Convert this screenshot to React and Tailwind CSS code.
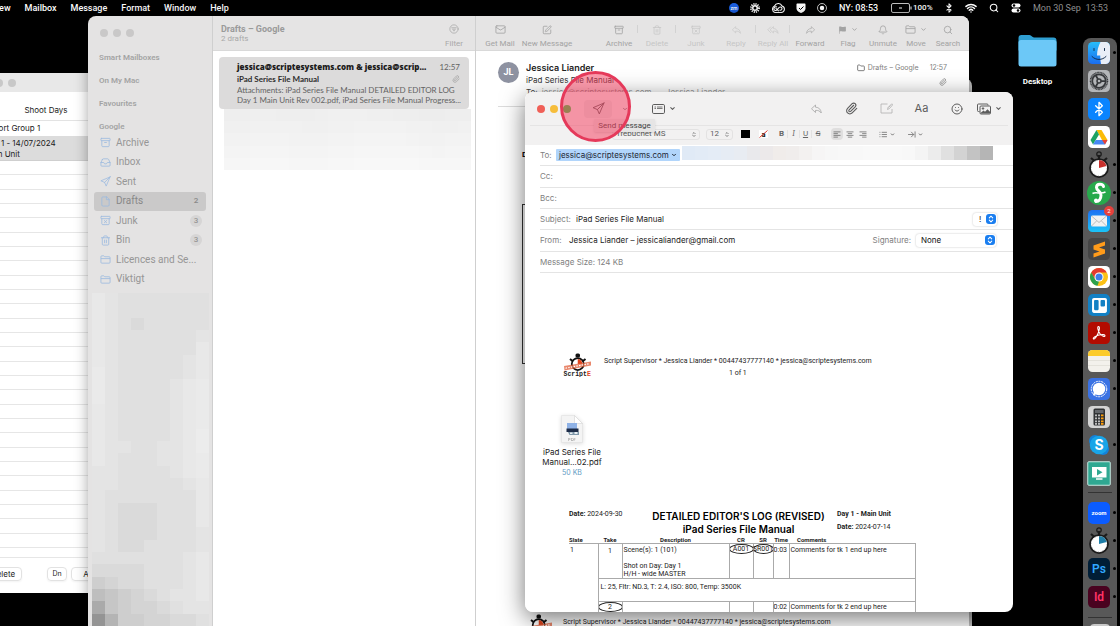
import React, { useState } from 'react';
import {
  Archive,
  ArchiveX,
  Bell,
  Bluetooth,
  ChevronDown,
  File,
  Folder,
  Inbox,
  Mail,
  Paperclip,
  Search,
  Smile,
  SquarePen,
  Trash2,
  Wifi,
} from 'lucide-react';
import { FaTrello } from 'react-icons/fa6';

const SendIcon = ({ size = 12, className }) => (
  <svg viewBox="0 0 24 24" width={size} height={size} className={className} fill="none" stroke="currentColor" strokeWidth="1.700" strokeLinejoin="round" strokeLinecap="round">
    <path d="M22 2 2 10.500l8 3.500L22 2ZM22 2l-8.500 20L10 14" />
  </svg>
);

const ReplyIcon = ({ className }) => (
  <svg viewBox="0 0 24 24" className={className} fill="none" stroke="currentColor" strokeWidth="1.500" strokeLinejoin="round">
    <path d="M10 4 2 11.500 10 19v-4.300c5.500-.3 8.800 1.300 11.500 5.300C21 13 17 8.700 10 8.300Z" />
  </svg>
);

const ReplyAllIcon = ({ className }) => (
  <svg viewBox="0 0 28 24" className={className} fill="none" stroke="currentColor" strokeWidth="1.500" strokeLinejoin="round">
    <path d="M15 4 7 11.500 15 19v-4.300c5-.3 8 1.300 11 5.300-.5-7-4.500-11.300-11-11.700Z" />
    <path d="M9 4 1.500 11.500 9 19" />
  </svg>
);

const ForwardIcon = ({ className }) => (
  <svg viewBox="0 0 24 24" className={className} fill="none" stroke="currentColor" strokeWidth="1.500" strokeLinejoin="round">
    <path d="m14 4 8 7.500L14 19v-4.300c-5.500-.3-8.800 1.300-11.500 5.300C3 13 7 8.700 14 8.300Z" />
  </svg>
);

const FlagIcon = ({ className }) => (
  <svg viewBox="0 0 24 24" className={className} fill="currentColor">
    <path d="M3 3c4-2 7 2 11 1 3-.7 5-1 7-1v12c-3 1-6 1.500-9 .7-3-.7-5-.7-7.500 0V22H3Z" />
  </svg>
);

const FilterIcon = ({ className }) => (
  <svg viewBox="0 0 24 24" className={className} fill="none" stroke="currentColor" strokeWidth="1.800" strokeLinecap="round">
    <circle cx="12" cy="12" r="10" />
    <path d="M6.500 9h11M8.500 12.500h7M10.500 16h3" />
  </svg>
);

const MoveIcon = ({ className }) => (
  <svg viewBox="0 0 24 24" className={className} fill="none" stroke="currentColor" strokeWidth="1.800" strokeLinejoin="round">
    <path d="M2 6c0-1.500.5-2 2-2h4.500l2 2H20c1.500 0 2 .5 2 2v10c0 1.500-.5 2-2 2H4c-1.500 0-2-.5-2-2ZM2 10h20" />
  </svg>
);

const FolderIcon = ({ size = 11, className }) => (
  <span className={className} style={{ width: size }}>
    <MoveIcon className="w-[11px] h-[11px]" />
  </span>
);

const Steppers = ({ className }) => (
  <svg viewBox="0 0 10 14" className={className} fill="none" stroke="currentColor" strokeWidth="1.800" strokeLinecap="round" strokeLinejoin="round">
    <path d="m2 5 3-3 3 3M2 9l3 3 3-3" />
  </svg>
);

const Lines = ({ d, className }) => (
  <svg viewBox="0 0 18 16" className={className} fill="none" stroke="currentColor" strokeWidth="1.600">
    <path d={d} />
  </svg>
);

const HeaderFieldsIcon = () => (
  <svg viewBox="0 0 26 20" className="w-[13px] h-[10px]" fill="none" stroke="currentColor" strokeWidth="2">
    <rect x="1" y="1" width="24" height="18" rx="2.500" />
    <path d="M5 6h3M10 6h11M5 9h3M10 9h11" strokeWidth="1.600" />
  </svg>
);

const MarkupIcon = () => (
  <svg viewBox="0 0 26 22" className="w-[13px] h-[11px]" fill="none" stroke="currentColor" strokeWidth="1.600">
    <path d="M15 2H2v18h22v-8" />
    <path d="m15 13 1-4 7-7c1-1 3 .5 2 2l-6 7ZM17 9l4-4" />
  </svg>
);

const PhotosIcon = () => (
  <svg viewBox="0 0 28 24" className="w-[14px] h-3" fill="none" stroke="currentColor" strokeWidth="2">
    <path d="M5 17H3c-1.500 0-2-.5-2-2V4c0-1.500.5-2 2-2h17c1.500 0 2 .5 2 2v1" />
    <rect x="6" y="6" width="21" height="16" rx="2" />
    <circle cx="12" cy="11" r="1.500" fill="currentColor" />
    <path d="m7 20 6-5 3 2.500 5-5 5 5V21H7Z" fill="currentColor" stroke="none" />
  </svg>
);

const ScriptELogo = () => (
  <svg viewBox="0 0 60 48" className="w-[30px] h-6 shrink-0">
    <rect x="25" y="1" width="9" height="8" rx="3" fill="#111" />
    <path d="m14 12 5 4M45 12l-5 4" stroke="#111" strokeWidth="4" />
    <circle cx="29.500" cy="22" r="12" fill="#fff" stroke="#111" strokeWidth="3.500" />
    <path d="M29.500 22V12a10 10 0 0 1 9 10Z" fill="#e2451d" />
    <path d="m2 26 54-9v8L3 35Z" fill="#e2603c" opacity=".75" />
    <path d="m5 30.500 48-9" stroke="#fff" strokeWidth="2.500" strokeDasharray="3 2.500" />
    <text x="1" y="46" fontFamily="Liberation Mono, monospace" fontWeight="700" fontSize="13" fill="#222">
      Script<tspan fill="#e2451d">E</tspan>
    </text>
  </svg>
);

const PdfIcon = () => (
  <svg viewBox="0 0 44 56" className="w-[22px] h-7 drop-shadow-sm">
    <path d="M1 1h26l16 16v38H1Z" fill="#f4f4f4" stroke="#ddd" />
    <path d="M27 1v16h16Z" fill="#fff" stroke="#ccc" />
    <rect x="12" y="16" width="20" height="13" fill="#8fb2e6" />
    <path d="M11 27h24v7H11Z" fill="#1d2c48" />
    <path d="M14 34h22v6H17Z" fill="#7d96a8" />
    <path d="M18 35h5v3h-5zM27 34h6v4h-6z" fill="#e8eef2" />
    <text x="22" y="51" textAnchor="middle" fontFamily="Inter, sans-serif" fontSize="8" fill="#888">PDF</text>
  </svg>
);

const Stopwatch = ({ color, slice }) => (
  <svg viewBox="0 0 48 56" className="w-6 h-7">
    <circle cx="24" cy="6" r="4.500" fill="none" stroke="#1b1b1b" strokeWidth="2.500" />
    <path d="M24 8v10M8 14l7 6M40 14l-7 6" stroke="#1b1b1b" strokeWidth="4.500" />
    <circle cx="24" cy="34" r="18" fill="#fff" stroke="#1b1b1b" strokeWidth="3.500" />
    <path d={slice} fill={color} />
    <circle cx="24" cy="34" r="15" fill="none" stroke="#777" strokeWidth="1.500" strokeDasharray="1 6.850" />
  </svg>
);

const FinderIcon = () => (
  <svg viewBox="0 0 44 44" className="w-[22px] h-[22px]">
    <defs>
      <linearGradient id="finder" x1="0" y1="0" x2="0" y2="1">
        <stop offset="0" stopColor="#27bdfb" />
        <stop offset="1" stopColor="#1b6df0" />
      </linearGradient>
    </defs>
    <rect width="44" height="44" rx="9" fill="url(#finder)" />
    <path d="M25 0h10a9 9 0 0 1 9 9v26a9 9 0 0 1-9 9h-9c-1-5-1.500-10-1.500-17H18C18 17 21 7 25 0Z" fill="#e9eef7" />
    <path d="M12 13v4M33 13v4M8 29c8 8 20 8 28 0" stroke="#16304f" strokeWidth="2" fill="none" strokeLinecap="round" />
  </svg>
);

const SettingsIcon = () => (
  <svg viewBox="0 0 44 44" className="w-[22px] h-[22px]">
    <rect width="44" height="44" rx="9" fill="#b3b5b8" />
    <g fill="none" stroke="#36383b">
      <circle cx="22" cy="22" r="17" strokeWidth="3" strokeDasharray="2 1" />
      <circle cx="22" cy="22" r="13.500" strokeWidth="3.500" />
      <circle cx="22" cy="22" r="4" strokeWidth="3" />
      <path d="M26 22h10M20 18.500 15 10M20 25.500 15 34" strokeWidth="3.500" />
    </g>
  </svg>
);

const BluetoothTile = () => (
  <span className="flex w-[22px] h-[22px] items-center justify-center rounded-[5px] bg-[#0a84ff] text-white">
    <Bluetooth size={16} strokeWidth={2} />
  </span>
);

const DriveIcon = () => (
  <svg viewBox="0 0 44 44" className="w-[22px] h-[22px]">
    <rect width="44" height="44" rx="9" fill="#fff" />
    <path d="M17 8h10l12 20H28Z" fill="#fbbc05" />
    <path d="M17 8 5 28l5 9 12-20Z" fill="#1da362" />
    <path d="M15.500 28H39l-5 9H10Z" fill="#4688f4" />
    <path d="M39 28H28l6 9Z" fill="#ea4335" />
  </svg>
);

const FinalDraftIcon = () => (
  <svg viewBox="0 0 48 48" className="w-6 h-6">
    <circle cx="24" cy="24" r="24" fill="#27a94c" />
    <path d="M33 11c-1-6-14-7-14 2 0 6 9 8 9 15 0 8-4 13-10 13" fill="none" stroke="#fff" strokeWidth="6" strokeLinecap="round" />
    <path d="M11 25c7-4 16 2 26-3" fill="none" stroke="#fff" strokeWidth="3" />
    <circle cx="18" cy="39" r="4" fill="#fff" />
  </svg>
);

const MailAppIcon = () => (
  <span className="relative">
    <svg viewBox="0 0 44 44" className="w-[22px] h-[22px]">
      <defs>
        <linearGradient id="mailapp" x1="0" y1="0" x2="0" y2="1">
          <stop offset="0" stopColor="#1d6ff2" />
          <stop offset="1" stopColor="#1bc4f8" />
        </linearGradient>
      </defs>
      <rect width="44" height="44" rx="9" fill="url(#mailapp)" />
      <rect x="6" y="11" width="32" height="22" rx="3" fill="#f1f1f1" />
      <path d="m7 12 15 13 15-13M7 32l10-10M37 32 27 22" fill="none" stroke="#aaa" strokeWidth="1.500" />
    </svg>
    <span className="absolute -top-1 -right-1 flex w-[10px] h-[10px] items-center justify-center rounded-full bg-[#e8403c] text-[6px] leading-none text-white">
      2
    </span>
  </span>
);

const SublimeIcon = () => (
  <svg viewBox="0 0 44 44" className="w-[22px] h-[22px]">
    <rect width="44" height="44" rx="9" fill="#454545" />
    <path d="m11 15 23-8v8l-12 4 12 4v8l-23 8v-8l12-4-12-4Z" fill="#ff9b1a" />
  </svg>
);

const ChromeIcon = () => (
  <svg viewBox="0 0 44 44" className="w-[22px] h-[22px]">
    <rect width="44" height="44" rx="9" fill="#fff" />
    <circle cx="22" cy="22" r="18" fill="#fbc116" />
    <path d="M6.400 13A18 18 0 0 1 37.600 13H22l-7.800 13.500Z" fill="#e33b2e" />
    <path d="M6.400 13 14.200 26.500 22 31l-3 8.700A18 18 0 0 1 6.400 13Z" fill="#2da14d" />
    <circle cx="22" cy="22" r="9" fill="#fff" />
    <circle cx="22" cy="22" r="7" fill="#3f7fe8" />
  </svg>
);

const TrelloTile = () => (
  <span className="flex w-[22px] h-[22px] items-center justify-center rounded-[5px] bg-[#1280c4] text-white">
    <FaTrello size={17} />
  </span>
);

const AcrobatIcon = () => (
  <svg viewBox="0 0 44 44" className="w-[22px] h-[22px]">
    <rect width="44" height="44" rx="9" fill="#b30b00" />
    <path
      d="M21 9c3 0 2 7-1 14-3 7-7 12-9 11-2-2 4-6 11-8 7-1.500 12-1 12 1.500 0 3-6 1-10-4-4-5-6-14.500-3-14.500Z"
      fill="none"
      stroke="#fff"
      strokeWidth="2.200"
    />
  </svg>
);

const NotesIcon = () => (
  <svg viewBox="0 0 44 44" className="w-[22px] h-[22px]">
    <rect width="44" height="44" rx="9" fill="#f3f1ec" />
    <path d="M0 12V9a9 9 0 0 1 9-9h26a9 9 0 0 1 9 9v3Z" fill="#fccb2a" />
    <path d="M0 21h44M0 31h44" stroke="#dfdcd5" strokeWidth="1.500" />
  </svg>
);

const SignalIcon = () => (
  <svg viewBox="0 0 44 44" className="w-[22px] h-[22px]">
    <rect width="44" height="44" rx="9" fill="#3a72e4" />
    <circle cx="22" cy="22" r="12.500" fill="#fff" />
    <path d="m10 35 2-8 6 5Z" fill="#fff" />
    <circle cx="22" cy="22" r="15.500" fill="none" stroke="#fff" strokeWidth="2" strokeDasharray="4 1.500" />
  </svg>
);

const CalculatorIcon = () => (
  <svg viewBox="0 0 44 44" className="w-[22px] h-[22px]">
    <rect width="44" height="44" rx="9" fill="#d4d4d4" />
    <rect x="11" y="5" width="23" height="34" rx="3" fill="#303234" />
    <rect x="14" y="8" width="17" height="6" fill="#63666a" />
    <path d="M14 18.500h10M14 24.500h10M14 30.500h10M14 35.500h10" stroke="#bbb" strokeWidth="3.500" strokeDasharray="4 2" />
    <path d="M26 18.500h5M26 24.500h5M26 30.500h5M26 35.500h5" stroke="#ff9f0a" strokeWidth="3.500" />
  </svg>
);

const SkypeIcon = () => (
  <svg viewBox="0 0 44 44" className="w-[22px] h-[22px]">
    <circle cx="14" cy="14" r="12" fill="#1382d8" />
    <circle cx="30" cy="30" r="12" fill="#1382d8" />
    <circle cx="22" cy="22" r="18.500" fill="#18a5e8" />
    <text x="22" y="32" textAnchor="middle" fontFamily="Inter, sans-serif" fontWeight="700" fontSize="28" fill="#fff">S</text>
  </svg>
);

const PlayerIcon = () => (
  <svg viewBox="0 0 48 50" className="w-6 h-[25px]">
    <rect x="1.500" y="1.500" width="45" height="47" rx="2" fill="#2fa892" stroke="#c9e9e2" strokeWidth="2" />
    <path d="M10 12h29v21H10Z" fill="#fff" />
    <path d="M18 36h13" stroke="#fff" strokeWidth="3" />
    <path d="m20 16 11 6.500L20 29Z" fill="#2fa892" />
  </svg>
);

const ZoomTile = () => (
  <span className="flex w-[22px] h-[22px] items-center justify-center rounded-[5px] bg-[#0b5cff] text-[6px] font-bold leading-none text-white">
    zoom
  </span>
);

const PsTile = () => (
  <span className="flex w-[22px] h-[22px] items-center justify-center rounded-[5px] bg-[#001e36] text-[12px] font-semibold leading-none text-[#31a8ff]">
    Ps
  </span>
);

const IdTile = () => (
  <span className="flex w-[22px] h-[22px] items-center justify-center rounded-[5px] bg-[#49021f] text-[12px] font-semibold leading-none text-[#ff3366]">
    Id
  </span>
);

const dockApps = [
  { name: 'Finder', icon: <FinderIcon />, running: true },
  { name: 'System Settings', icon: <SettingsIcon /> },
  { name: 'Bluetooth File Exchange', icon: <BluetoothTile /> },
  { name: 'Google Drive', icon: <DriveIcon /> },
  { name: 'ScriptE', icon: <Stopwatch color="#c9302c" slice="M24 34V18a16 16 0 0 1 15 12Z" />, running: true },
  { name: 'Final Draft', icon: <FinalDraftIcon />, running: true },
  { name: 'Mail', icon: <MailAppIcon />, running: true },
  { name: 'Sublime Text', icon: <SublimeIcon />, running: true },
  { name: 'Chrome', icon: <ChromeIcon />, running: true },
  { name: 'Trello', icon: <TrelloTile />, running: true },
  { name: 'Acrobat', icon: <AcrobatIcon />, running: true },
  { name: 'Notes', icon: <NotesIcon />, running: true },
  { name: 'Signal', icon: <SignalIcon />, running: true },
  { name: 'Calculator', icon: <CalculatorIcon /> },
  { name: 'Skype', icon: <SkypeIcon />, running: true },
  { name: 'Player', icon: <PlayerIcon /> },
];

const dockRecent = [
  { name: 'Zoom', icon: <ZoomTile />, running: true },
  { name: 'Timer', icon: <Stopwatch color="#1f7ea8" slice="M24 34V18a16 16 0 0 1 15.500 12Z" />, running: true },
  { name: 'Photoshop', icon: <PsTile />, running: true },
  { name: 'InDesign', icon: <IdTile />, running: true },
];

const DockItem = ({ app }) => (
  <button aria-label={app.name} className="relative flex h-7 w-full shrink-0 items-center justify-center pr-[2px]">
    {app.icon}
    {app.running && <span className="absolute right-[1px] top-3 w-[3px] h-[3px] rounded-full bg-black" />}
  </button>
);

const Dock = () => (
  <nav aria-label="Dock" className="absolute right-[3px] top-[38px] bottom-0 flex w-[34px] flex-col overflow-hidden rounded-t-lg bg-[#585858] pt-[1px]">
    {dockApps.map((app) => (
      <DockItem key={app.name} app={app} />
    ))}
    <hr className="mx-[5px] mb-[6px] mt-[5px] shrink-0 border-[#333]" />
    {dockRecent.map((app) => (
      <DockItem key={app.name} app={app} />
    ))}
    <hr className="mx-[5px] my-[6px] shrink-0 border-[#333]" />
    <span className="mx-[7px] h-5 shrink-0 rounded-t-sm bg-[#c9c9c9]" />
  </nav>
);

const MenuBar = () => (
  <header className="flex h-4 items-center justify-between bg-black pr-3 text-[9px] font-medium leading-none text-white">
    <nav className="-ml-[9px] flex gap-[14px]">
      {['View', 'Mailbox', 'Message', 'Format', 'Window', 'Help'].map((item) => (
        <button key={item}>{item}</button>
      ))}
    </nav>
    <div className="flex items-center gap-3">
      <div className="flex items-center gap-[11px]">
        <span className="flex w-[10px] h-[10px] items-center justify-center rounded-full bg-[#1b5fe0] text-[5px]">zm</span>
        <svg viewBox="0 0 20 20" className="w-[10px] h-[10px]" fill="none" stroke="#fff">
          <circle cx="10" cy="10" r="4.500" strokeWidth="3" />
          <circle cx="10" cy="10" r="8" strokeWidth="4" strokeDasharray="2.200 1.990" />
        </svg>
        <svg viewBox="0 0 28 20" className="w-[14px] h-[10px]" fill="none" stroke="#fff" strokeWidth="2.200">
          <path d="M8 19a7 7 0 0 1-1-13C10 0 19-1 22 6c7 2 6 12-1 13Z" />
          <path d="M12 8c-7-3-9 8-2 7 4-1 5-8 9-7 5 1 3 8-2 6M9 11c2-1 4 4 7 5" />
        </svg>
        <svg viewBox="0 0 20 20" className="w-[10px] h-[10px]">
          <path d="M3 1h14c1.500 0 2 1 2 2v8c0 4-5 8-9 9-4-1-9-5-9-9V3c0-1 .5-2 2-2Z" fill="#fff" />
          <path d="m6 10 3 3 6-6" fill="none" stroke="#000" strokeWidth="2" />
        </svg>
        <svg viewBox="0 0 20 20" className="w-[10px] h-[10px]">
          <circle cx="10" cy="10" r="9" fill="none" stroke="#fff" strokeWidth="1.500" />
          <circle cx="10" cy="10" r="4.500" fill="#fff" />
        </svg>
      </div>
      <span className="w-10 whitespace-nowrap">NY: 08:53</span>
      <span className="flex w-[42px] items-center gap-[1px] text-[8px]">
        <svg viewBox="0 0 42 20" className="w-[21px] h-[10px] shrink-0" fill="none" stroke="#fff" strokeWidth="1.500">
          <rect x="1" y="1" width="36" height="18" rx="3" />
          <path d="M40 7v6M16 10h6" strokeWidth="2" />
        </svg>
        100%
      </span>
      <Bluetooth size={10} strokeWidth={2.5} className="-mx-px" />
      <Wifi size={12} strokeWidth={3} />
      <Search size={10} strokeWidth={2.5} />
      <svg viewBox="0 0 20 20" className="w-[10px] h-[10px]">
        <rect x="1" y="1" width="18" height="8" rx="4" fill="#fff" />
        <circle cx="6" cy="5" r="2.500" fill="#000" />
        <rect x="1" y="11" width="18" height="8" rx="4" fill="#fff" />
        <circle cx="14" cy="15" r="2.500" fill="#000" />
      </svg>
      <time className="flex w-[75px] justify-between whitespace-nowrap font-normal text-[#8f8f8f]">
        <span>Mon 30 Sep</span>
        <span>13:53</span>
      </time>
    </div>
  </header>
);

const ShootDaysWindow = () => (
  <section className="absolute -left-6 top-[73px] flex h-[520px] w-[140px] flex-col bg-white font-['Inter',sans-serif] text-[8px] leading-[11px] text-[#222]">
    <div className="flex h-[19px] items-center gap-[5px] bg-[#e8e8e8] pl-[19px]">
      <span className="w-2 h-2 rounded-full bg-[#c8c8c8]" />
      <span className="w-2 h-2 rounded-full bg-[#c8c8c8]" />
    </div>
    <h2 className="flex h-[29px] items-end justify-center border-b border-[#e3e3e3] pb-1">Shoot Days</h2>
    <p className="h-[15px] pl-2 pt-[2px]">Report Group 1</p>
    <p className="h-[25px] border-b border-[#cfcfcf] bg-[#dcdcdc] pl-2 pt-[2px]">
      Day 1 - 14/07/2024
      <br />
      Main Unit
    </p>
    <div className="flex flex-1 flex-col">
      {Array.from({ length: 27 }, (_, i) => (
        <div key={i} className="flex-1 border-b border-[#e6e6e6]" />
      ))}
    </div>
    <div className="h-[10px] border-b border-[#e6e6e6]" />
    <div className="flex h-[35px] items-center gap-1 pb-1 pl-2">
      <button className="h-[14px] w-[38px] rounded border border-[#e2e2e2] leading-none shadow-xs">Delete</button>
      <button className="ml-[21px] h-[14px] w-5 shrink-0 rounded border border-[#e2e2e2] text-[7px] leading-none shadow-xs">Dn</button>
      <button className="h-[14px] w-10 shrink-0 rounded border border-[#e2e2e2] leading-none shadow-xs">Add</button>
    </div>
  </section>
);

// redacted blocks, one hex digit per cell, f is the lightest
const sidebarMosaic = [
  'ba9999999',
  'ba9999999',
  'ba9899999',
  'ba999999a',
  'ba999999b',
  'ba99999ab',
  'ca99999ab',
  'ca9999abc',
  'ca9999abc',
  'ba9999abc',
  'ba9999abc',
  'ba9999abd',
  'baa99aabd',
  'ba999aabc',
  'aa9999abc',
  'aa99999ab',
  'a9999999b',
  'a9888999b',
  'a9888999b',
  'a9888999a',
  'a9889999a',
  '9999999ab',
  '8888999ab',
  '6788999ab',
  '456789aab',
  '2567789aa',
  '036677889',
];

const listMosaic = ['3344333455544332233', '5566665566777766556', '7788877788999987788', '99aaa999aabbbbba9aa', 'bbcccbbbccdddddcccc'];

const sidebarLevel = (digit) => 238 - Math.round(0.4 * (15 - digit) ** 2);
const listLevel = (digit) => 235 + digit;

const Mosaic = ({ rows, level, className }) => (
  <div aria-hidden="true" className={className}>
    {rows.map((row, i) => (
      <div key={i} className="flex flex-1">
        {row.split('').map((digit, j) => {
          const grey = level(parseInt(digit, 16));
          return <span key={j} className="flex-1" style={{ backgroundColor: `rgb(${grey}, ${grey}, ${grey})` }} />;
        })}
      </div>
    ))}
  </div>
);

const mailboxes = [
  { name: 'Archive', Icon: Archive },
  { name: 'Inbox', Icon: Inbox },
  { name: 'Sent', Icon: SendIcon },
  { name: 'Drafts', Icon: File, count: 2 },
  { name: 'Junk', Icon: ArchiveX, count: 3 },
  { name: 'Bin', Icon: Trash2, count: 3 },
  { name: 'Licences and Se...', Icon: FolderIcon },
  { name: 'Viktigt', Icon: FolderIcon },
];

const Sidebar = ({ active, onSelect }) => (
  <aside className="flex w-[125px] shrink-0 flex-col border-r border-[#cfcfcf] bg-[#e4e3e3] text-[#969696]">
    <div className="flex h-[30px] shrink-0 items-end gap-[5px] pb-[9px] pl-3">
      <span className="w-2 h-2 rounded-full bg-[#c9c8c8]" />
      <span className="w-2 h-2 rounded-full bg-[#c9c8c8]" />
      <span className="w-2 h-2 rounded-full bg-[#c9c8c8]" />
    </div>
    {['Smart Mailboxes', 'On My Mac', 'Favourites', 'Google'].map((label) => (
      <h3 key={label} className="flex h-[23px] shrink-0 items-center pl-[11px] text-[8px] font-semibold leading-none text-[#a3a3a3]">
        {label}
      </h3>
    ))}
    <div className="mx-[6px] mt-[-5px] flex h-[156px] shrink-0 flex-col">
      {mailboxes.map(({ name, Icon, count }) => (
        <a
          key={name}
          href="#mailbox"
          onClick={() => onSelect(name)}
          className={`flex flex-1 items-center rounded-[3px] pl-[6px] pr-1 text-[10px] leading-none ${
            active === name ? 'bg-[#cac9c9] text-[#888]' : ''
          }`}
        >
          <Icon size={11} strokeWidth={1.8} className="mr-[5px] shrink-0 text-[#9dbbe0]" />
          <span className="flex-1 whitespace-nowrap">{name}</span>
          {count && (
            <span
              className={`flex w-3 h-3 items-center justify-center rounded-full text-[8px] font-medium ${
                active === name ? '' : 'bg-[#d6d5d5]'
              }`}
            >
              {count}
            </span>
          )}
        </a>
      ))}
    </div>
    <Mosaic rows={sidebarMosaic} level={sidebarLevel} className="ml-1 mr-[3px] mt-1 flex flex-1 flex-col" />
  </aside>
);

const MessageList = () => (
  <section className="flex w-[263px] shrink-0 flex-col border-r border-[#cfcfcf] bg-white">
    <div className="flex h-[35px] shrink-0 justify-between border-b border-[#d9d9d9] bg-[#e5e4e4] pl-2 pr-3 text-[#a8a8a8]">
      <div>
        <h2 className="pt-[7px] text-[9px] font-bold leading-3 text-[#9a9a9a]">Drafts – Google</h2>
        <p className="text-[8px] leading-[8px]">2 drafts</p>
      </div>
      <button className="flex flex-col items-center gap-[6px] pt-2 text-[8px] leading-[8px]">
        <FilterIcon className="w-[10px] h-[10px]" />
        Filter
      </button>
    </div>
    <article className="mx-[6px] mt-[6px] flex h-[52px] flex-col justify-center rounded bg-[#dcdbdb] pl-[18px] pr-[9px] font-['Lato','Open_Sans',sans-serif] text-[8px] leading-[10px] text-[#636363]">
      <div className="flex items-center justify-between whitespace-nowrap">
        <h3 className="font-['Open_Sans',sans-serif] text-[8px] font-extrabold leading-3 text-[#1c1c1c]">
          jessica@scriptesystems.com &amp; jessica@scrip...
        </h3>
        <time>12:57</time>
      </div>
      <div className="flex items-center justify-between">
        <h4 className="text-[8px] font-bold leading-3 text-[#2c2c2c]">iPad Series File Manual</h4>
        <Paperclip size={8} className="text-[#a0a0a0]" />
      </div>
      <p className="whitespace-nowrap">
        Attachments: iPad Series File Manual DETAILED EDITOR LOG
        <br />
        Day 1 Main Unit Rev 002.pdf, iPad Series File Manual Progress...
      </p>
    </article>
    <Mosaic rows={listMosaic} level={listLevel} className="ml-[11px] mr-1 flex h-[61px] flex-col" />
  </section>
);

const leftTools = [
  { label: 'Get Mail', icon: <Mail size={11} strokeWidth={1.8} />, width: 'w-10' },
  { label: 'New Message', icon: <SquarePen size={10} strokeWidth={2} />, width: 'w-[54px]' },
];

const rightTools = [
  { label: 'Archive', icon: <Archive size={10} strokeWidth={2} />, width: 'w-[38px]', divider: true },
  { label: 'Delete', icon: <Trash2 size={10} strokeWidth={1.8} />, width: 'w-[38px]', off: true, divider: true },
  { label: 'Junk', icon: <ArchiveX size={10} strokeWidth={1.8} />, width: 'w-10', off: true },
  { label: 'Reply', icon: <ReplyIcon className="w-[11px] h-[10px]" />, width: 'w-10', off: true, divider: true },
  { label: 'Reply All', icon: <ReplyAllIcon className="w-3 h-[10px]" />, width: 'w-[34px]', off: true, divider: true },
  { label: 'Forward', icon: <ForwardIcon className="w-[11px] h-[10px]" />, width: 'w-10' },
  { label: 'Flag', icon: <FlagIcon className="w-[9px] h-[10px]" />, width: 'w-9', menu: true },
  { label: 'Unmute', icon: <Bell size={10} strokeWidth={2} />, width: 'w-[34px]' },
  { label: 'Move', icon: <MoveIcon className="w-[11px] h-[11px]" />, width: 'w-8', menu: true },
  { label: 'Search', icon: <Search size={10} strokeWidth={2} />, width: 'w-8' },
];

const ToolButton = ({ tool }) => (
  <>
    <button
      className={`flex shrink-0 flex-col items-center gap-[5px] whitespace-nowrap pt-2 text-[8px] leading-[8px] ${tool.width} ${
        tool.off ? 'text-[#c6c6c6]' : 'text-[#a3a3a3]'
      }`}
    >
      <span className="flex h-[11px] items-center gap-1">
        {tool.icon}
        {tool.menu && <ChevronDown size={7} strokeWidth={3} />}
      </span>
      {tool.label}
    </button>
    {tool.divider && <span className="-ml-px mt-[9px] h-2 w-px shrink-0 bg-[#d2d2d2]" />}
  </>
);

const MessagePane = () => (
  <section className="flex min-w-0 flex-1 flex-col bg-white text-[#333]">
    <div className="flex h-[35px] shrink-0 justify-between border-b border-[#d9d9d9] bg-[#e5e4e4] pl-1 pr-[5px]">
      <div className="flex">
        {leftTools.map((tool) => (
          <ToolButton key={tool.label} tool={tool} />
        ))}
      </div>
      <div className="flex">
        {rightTools.map((tool) => (
          <ToolButton key={tool.label} tool={tool} />
        ))}
      </div>
    </div>
    <div className="mx-[22px] flex h-14 shrink-0 gap-[7px] border-b border-[#dcdcdc] pt-[11px]">
      <span className="flex w-[21px] h-[21px] shrink-0 items-center justify-center rounded-full bg-[#8e92a1] text-[9px] font-bold text-white">
        JL
      </span>
      <div className="flex-1 font-['Inter',sans-serif] text-[8px] leading-[12px]">
        <h3 className="-mt-[1px] text-[9px] font-semibold leading-[13px] text-[#222]">Jessica Liander</h3>
        <p>iPad Series File Manual</p>
        <p className="flex gap-1 text-[#999]">
          <span className="text-[#444]">To:</span>
          <span>jessica@scriptesystems.com,</span>
          <span className="ml-2">Jessica Liander</span>
        </p>
      </div>
      <div className="flex flex-col items-end gap-1 font-['Inter',sans-serif] text-[7px] leading-3 text-[#808080]">
        <p className="flex items-center gap-[3px]">
          <Folder size={8} strokeWidth={2.5} className="text-[#666]" />
          Drafts – Google
          <time className="ml-2">12:57</time>
        </p>
        <Paperclip size={8} />
      </div>
    </div>
    <div className="flex flex-1 flex-col pl-[46px] pt-[43px]">
      <p className="text-[8px] font-bold leading-[10px] text-black">D</p>
      <div className="mt-11 h-[160px] border border-[#333]" />
      <div className="mt-[250px] flex gap-[9px] pl-[2px]">
        <ScriptELogo />
        <p className="pt-[3px] text-[7px] leading-[10px] text-[#222]">
          Script Supervisor * Jessica Liander * 00447437777140 * jessica@scriptesystems.com
        </p>
      </div>
    </div>
  </section>
);

const MailWindow = () => {
  const [mailbox, setMailbox] = useState('Drafts');

  return (
    <main className="absolute bottom-0 left-[88px] right-[151px] top-4 flex overflow-hidden rounded-t-lg shadow-[0_0_14px_rgba(0,0,0,0.35)]">
      <Sidebar active={mailbox} onSelect={setMailbox} />
      <MessageList />
      <MessagePane />
    </main>
  );
};

// recipients hidden behind coarse pixels
const recipientCells = [
  '#e0eaf6', '#e2ebf6', '#e4ecf6', '#e6ecf4', '#e8ecf2', '#e9e9ec', '#ece9ea', '#f0ecea',
  '#f0edec', '#f3f1f0', '#f6f5f5', '#f7f7f7', '#f8f8f8', '#f8f8f8', '#f9f9f9', '#f9f9f9',
  '#f9f9f9', '#f8f8f8', '#f4f4f4', '#ececec', '#e0e0e0', '#d3d3d3', '#c3c3c3', '#b5b5b5',
];

const ComposeToolbar = () => (
  <div className="flex h-[33px] shrink-0 items-center justify-between pl-3 pr-[9px] text-[#5c5c5c]">
    <div className="flex items-center">
      <div className="flex gap-[5px]">
        <span className="w-2 h-2 rounded-full bg-[#f05f57]" />
        <span className="w-2 h-2 rounded-full bg-[#f6bd3b]" />
        <span className="w-2 h-2 rounded-full bg-[#3cc84a]" />
      </div>
      <button aria-label="Send message" className="ml-[13px] flex w-7 h-[18px] items-center justify-center rounded bg-[#e4e4e4]">
        <SendIcon size={13} />
      </button>
      <button aria-label="Send options" className="ml-[10px]">
        <ChevronDown size={6} strokeWidth={3} />
      </button>
      <button aria-label="Header fields" className="ml-6 flex items-center gap-1">
        <HeaderFieldsIcon />
        <ChevronDown size={7} strokeWidth={3.5} />
      </button>
    </div>
    <div className="flex items-center">
      <button aria-label="Reply" className="flex w-[35px] justify-center text-[#a0a0a0]">
        <ReplyIcon className="w-[13px] h-3" />
      </button>
      <button aria-label="Attach" className="flex w-[35px] justify-center">
        <Paperclip size={13} strokeWidth={2} />
      </button>
      <button aria-label="Markup" className="flex w-[35px] justify-center text-[#b0b0b0]">
        <MarkupIcon />
      </button>
      <button className="flex w-[35px] justify-center font-['Inter',sans-serif] text-[11px] leading-none">Aa</button>
      <button aria-label="Emoji" className="flex w-[35px] justify-center">
        <Smile size={12} strokeWidth={2} />
      </button>
      <button aria-label="Photos" className="flex w-[30px] items-center justify-center gap-1">
        <PhotosIcon />
        <ChevronDown size={7} strokeWidth={3.5} />
      </button>
    </div>
  </div>
);

const FormatBar = () => (
  <div className="mx-[5px] flex h-5 shrink-0 items-center border-t border-[#e5e4e4] pb-[3px] pl-[82px] text-[8px] leading-none text-[#5c5c5c]">
    <label className="flex h-[11px] w-[88px] items-center rounded-[3px] border border-[#e3e2e2] pr-[3px]">
      <select aria-label="Font" className="w-0 flex-1 appearance-none pl-[3px]">
        <option>Trebuchet MS</option>
      </select>
      <Steppers className="w-1 h-[7px]" />
    </label>
    <label className="ml-[6px] flex h-[11px] w-[27px] items-center rounded-[3px] border border-[#e3e2e2] pr-[3px]">
      <select aria-label="Font size" className="w-0 flex-1 appearance-none pl-[3px]">
        <option>12</option>
      </select>
      <Steppers className="w-1 h-[7px]" />
    </label>
    <button aria-label="Text colour" className="ml-2 w-[9px] h-2 bg-black" />
    <button aria-label="Highlight colour" className="ml-[9px] w-[9px] h-2">
      <svg viewBox="0 0 18 16" className="w-[9px] h-2">
        <rect width="18" height="16" fill="#fff" />
        <text x="5" y="13" fontFamily="Inter, sans-serif" fontWeight="700" fontSize="14" fill="#111">a</text>
        <path d="M1 15 17 1" stroke="#d8382f" strokeWidth="2" />
      </svg>
    </button>
    <div className="ml-2 flex text-[#666]">
      <button className="w-3 border-r border-[#e3e2e2] font-bold">B</button>
      <button className="w-3 border-r border-[#e3e2e2] font-serif italic">I</button>
      <button className="w-3 border-r border-[#e3e2e2] underline">U</button>
      <button className="w-3 line-through">S</button>
    </div>
    <div className="ml-[7px] flex gap-[1px]">
      <button aria-label="Align left" className="flex w-3 h-3 items-center justify-center rounded-sm bg-[#dfdede]">
        <Lines className="w-2 h-[7px]" d="M1 2h16M1 6h10M1 10h16M1 14h10" />
      </button>
      <button aria-label="Align centre" className="flex w-3 h-3 items-center justify-center">
        <Lines className="w-2 h-[7px]" d="M1 2h16M4 6h10M1 10h16M4 14h10" />
      </button>
      <button aria-label="Align right" className="flex w-3 h-3 items-center justify-center">
        <Lines className="w-2 h-[7px]" d="M1 2h16M7 6h10M1 10h16M7 14h10" />
      </button>
    </div>
    <button aria-label="Lists" className="ml-[10px] flex items-center gap-[3px]">
      <Lines className="w-2 h-[7px]" d="M1 3h2M1 8h2M1 13h2M6 3h12M6 8h12M6 13h12" />
      <ChevronDown size={5} strokeWidth={4} />
    </button>
    <button aria-label="Indent" className="ml-[13px] flex items-center gap-[2px]">
      <Lines className="w-2 h-[7px]" d="M0 8h13M7 2l6 6-6 6M16 1v14" />
      <ChevronDown size={5} strokeWidth={4} />
    </button>
  </div>
);

const BlueSteppers = () => (
  <span className="flex w-[10px] h-[10px] items-center justify-center rounded-[3px] bg-[#1a7ef0] text-white">
    <Steppers className="w-[6px] h-2" />
  </span>
);

const Field = ({ children }) => (
  <div className="flex flex-1 items-center border-b border-[#e4e4e4]">{children}</div>
);

const ComposeFields = () => (
  <div className="ml-[15px] flex h-32 shrink-0 flex-col font-['Inter',sans-serif] text-[8px] leading-3 text-[#808080]">
    <Field>
      <span className="w-4">To:</span>
      <button className="flex h-3 items-center gap-[2px] whitespace-nowrap rounded-[1px] bg-[#b1d5fb] px-[3px] text-[#1d2733]">
        jessica@scriptesystems.com
        <ChevronDown size={6} strokeWidth={4} />
      </button>
      <div aria-hidden="true" className="mb-1 ml-[2px] mr-5 flex h-[14px] flex-1">
        {recipientCells.map((cell, i) => (
          <span key={i} className="flex-1" style={{ backgroundColor: cell }} />
        ))}
      </div>
    </Field>
    <Field>
      <label htmlFor="cc">Cc:</label>
      <input id="cc" className="ml-1 flex-1 text-[#222] outline-none" />
    </Field>
    <Field>
      <label htmlFor="bcc">Bcc:</label>
      <input id="bcc" className="ml-1 flex-1 text-[#222] outline-none" />
    </Field>
    <Field>
      <label htmlFor="subject" className="w-9">Subject:</label>
      <input id="subject" defaultValue="iPad Series File Manual" className="flex-1 text-[#222] outline-none" />
      <label className="mr-4 flex h-[13px] w-6 items-center rounded-[3px] pr-[1px] shadow-[0_0_2px_rgba(0,0,0,0.25)]">
        <select aria-label="Priority" className="w-0 flex-1 appearance-none pl-[6px] text-[#222]">
          <option>!</option>
        </select>
        <BlueSteppers />
      </label>
    </Field>
    <Field>
      <span className="w-[29px]">From:</span>
      <span className="flex-1 text-[#222]">Jessica Liander – jessicaliander@gmail.com</span>
      <label htmlFor="signature">Signature:</label>
      <span className="ml-[5px] mr-[17px] flex h-[13px] w-20 items-center rounded-[3px] pr-[1px] shadow-[0_0_2px_rgba(0,0,0,0.25)]">
        <select id="signature" className="flex-1 appearance-none pl-[5px] text-[#111]">
          <option>None</option>
        </select>
        <BlueSteppers />
      </span>
    </Field>
    <Field>Message Size: 124 KB</Field>
  </div>
);

const Circled = ({ children }) => (
  <span className="-mx-px flex h-[10px] items-center justify-center rounded-[50%] border border-[#222]">{children}</span>
);

const EditorLog = () => (
  <section className="mt-8 ml-11 w-[346px] text-[7px] leading-[8px] text-[#222]">
    <div className="flex">
      <p className="w-[71px]">
        <b>Date:</b> 2024-09-30
      </p>
      <h2 className="flex-1 whitespace-nowrap text-center font-['Inter',sans-serif] text-[10px] font-semibold leading-[13px] text-black">
        DETAILED EDITOR'S LOG (REVISED)
        <br />
        iPad Series File Manual
      </h2>
      <div className="w-[78px]">
        <p className="mb-[5px] font-bold">Day 1 - Main Unit</p>
        <p>
          <b>Date:</b> 2024-07-14
        </p>
      </div>
    </div>
    <table className="w-full table-fixed border-collapse text-left align-top">
      <colgroup>
        <col className="w-[29px]" />
        <col className="w-6" />
        <col className="w-[107px]" />
        <col className="w-6" />
        <col className="w-5" />
        <col className="w-4" />
        <col className="w-[126px]" />
      </colgroup>
      <thead className="text-[6px] leading-[7px]">
        <tr>
          <th>Slate</th>
          <th className="text-center">Take</th>
          <th className="text-center">Description</th>
          <th className="text-center">CR</th>
          <th className="text-center">SR</th>
          <th className="text-center">Time</th>
          <th className="pl-2">Comments</th>
        </tr>
      </thead>
      <tbody className="[&_td]:align-top [&_td]:border-[#aaa]">
        <tr className="h-[35px]">
          <td className="border-t pl-[1px] pt-[2px]">1</td>
          <td className="border pt-[3px] text-center">1</td>
          <td className="border pl-[1px] pt-[2px]">
            Scene(s): 1 (101)
            <br />
            <br />
            Shot on Day: Day 1
            <br />
            H/H - wide MASTER
          </td>
          <td className="border">
            <Circled>A001</Circled>
          </td>
          <td className="border">
            <Circled>SR001</Circled>
          </td>
          <td className="border pt-[2px]">0:03</td>
          <td className="border pl-[1px] pt-[2px]">Comments for tk 1 end up here</td>
        </tr>
        <tr className="h-[23px]">
          <td rowSpan={2} />
          <td colSpan={6} className="border pl-[2px] pt-1">
            L: 25, Fltr: ND.3, T: 2.4, ISO: 800, Temp: 3500K
          </td>
        </tr>
        <tr>
          <td className="border">
            <Circled>2</Circled>
          </td>
          <td className="border" />
          <td className="border" />
          <td className="border" />
          <td className="border pt-[1px]">0:02</td>
          <td className="border pl-[1px] pt-[1px]">Comments for tk 2 end up here</td>
        </tr>
      </tbody>
    </table>
  </section>
);

const ComposeBody = () => (
  <div className="flex min-h-0 flex-1 flex-col overflow-hidden pt-20">
    <div className="flex gap-[11px] pl-[38px]">
      <ScriptELogo />
      <p className="pt-[2px] text-center text-[7px] leading-3 text-[#222]">
        Script Supervisor * Jessica Liander * 00447437777140 * jessica@scriptesystems.com
        <br />1 of 1
      </p>
    </div>
    <figure className="ml-[17px] mt-9 flex w-[60px] flex-col items-center text-center">
      <PdfIcon />
      <figcaption className="mt-1 whitespace-nowrap font-['Inter',sans-serif] text-[8px] leading-[10px] text-[#222]">
        iPad Series File
        <br />
        Manual...02.pdf
        <span className="block text-[7px] leading-[11px] text-[#5f9bc4]">50 KB</span>
      </figcaption>
    </figure>
    <EditorLog />
  </div>
);

const ComposeWindow = () => (
  <section className="absolute left-[525px] right-[107px] top-[92px] h-[520px] rounded-lg shadow-[0_6px_24px_rgba(0,0,0,0.55)]">
    <div className="flex h-full flex-col overflow-hidden rounded-lg bg-white">
      <div className="flex shrink-0 flex-col bg-[#f2f1f1]">
        <ComposeToolbar />
        <FormatBar />
      </div>
      <ComposeFields />
      <ComposeBody />
    </div>
    <span
      role="tooltip"
      className="absolute left-[69px] top-[27px] flex h-[13px] w-[61px] items-center justify-center rounded-[1px] bg-[#e6e5e5] text-[8px] text-[#444] shadow-sm"
    >
      Send message
    </span>
    {/* click highlight */}
    <span className="absolute -top-[21px] left-[35px] w-[71px] h-[71px] rounded-full border-[3px] border-[#e5395a] bg-[#f5375a]/50" />
  </section>
);

const DesktopFolder = () => (
  <a href="#desktop" className="absolute right-[60px] top-[34px] flex w-[45px] flex-col items-center gap-[11px] text-[8px] font-bold leading-[8px] text-white">
    <svg viewBox="0 0 78 66" className="w-[39px] h-[33px]">
      <path d="M1 8c0-4 2-6 6-6h16c4 0 5 5 9 5h39c4 0 6 2 6 6v20H1Z" fill="#2f9fd2" />
      <rect x="1" y="12" width="76" height="53" rx="5" fill="#6cc8f7" />
    </svg>
    Desktop
  </a>
);

export default function App() {
  return (
    <div className="relative h-screen overflow-hidden bg-black font-['Roboto','Inter',sans-serif]">
      <MenuBar />
      <ShootDaysWindow />
      <div className="absolute bottom-0 right-[148px] top-[78px] w-20 rounded-t-lg bg-[#d4d4d4]" />
      <MailWindow />
      <ComposeWindow />
      <DesktopFolder />
      <Dock />
    </div>
  );
}
